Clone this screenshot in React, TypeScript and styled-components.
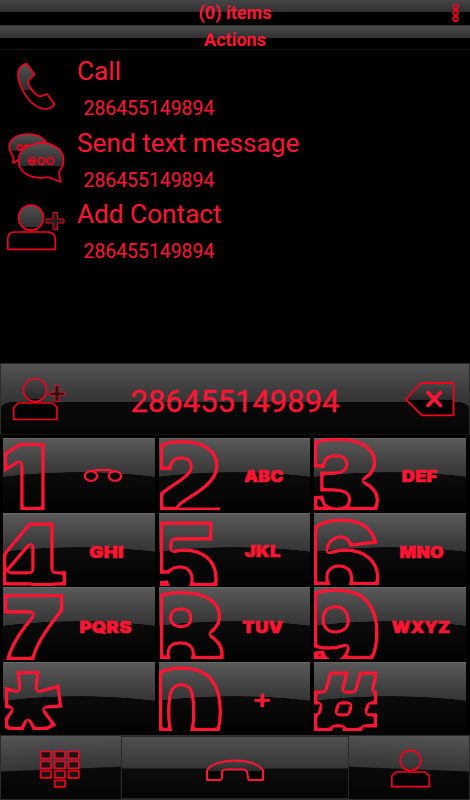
import React from "react";
import styled, { createGlobalStyle, css } from "styled-components";

const RED = "#ff1533";
const LINE = "#f5001c";

const GlobalStyle = createGlobalStyle`
  * { box-sizing: border-box; }
  body { margin: 0; background: #000; font-family: Roboto, "Liberation Sans", sans-serif; color: ${RED}; }
`;

const Screen = styled.div`
  width: 470px;
  height: 800px;
  display: flex;
  flex-direction: column;
  background: #000;
  overflow: hidden;
`;

const TitleBar = styled.header`
  height: 25px;
  display: grid;
  grid-template-columns: 30px 1fr 30px;
  align-items: center;
  justify-items: center;
  font-size: 18px;
  line-height: 24px;
  font-weight: 700;
  background: linear-gradient(#464646 0, #303030 12px, #000 12px);
`;

const SectionBar = styled.div`
  height: 25px;
  text-align: center;
  font-size: 18px;
  line-height: 27px;
  font-weight: 700;
  border-top: 1px solid #333;
  border-bottom: 1px solid #151515;
  background: linear-gradient(#4a4a4a 0, #303030 12px, #000 12px);
`;

const ActionList = styled.main`
  height: 313px;
  flex: none;
  padding-top: 2px;
`;

const ActionRow = styled.section`
  height: 71.5px;
  display: grid;
  grid-template-columns: 77px 1fr;
`;

const ActionText = styled.div`
  display: flex;
  flex-direction: column;
`;

const ActionTitle = styled.div`
  font-size: 26.2px;
  line-height: 38px;
`;

const ActionNumber = styled.div`
  padding-left: 6.5px;
  font-size: 19.4px;
  line-height: 38px;
`;

const NumberBar = styled.section`
  height: 72px;
  flex: none;
  display: grid;
  grid-template-columns: 77px 1fr 77px;
  border: 1px solid #2c2c2c;
  border-bottom-color: #141414;
  background:
    radial-gradient(ellipse 12px 6px at 12px 6px, #090909 96%, transparent) 0 38px / 12px 6px no-repeat,
    radial-gradient(ellipse 12px 6px at 0 6px, #090909 96%, transparent) 100% 38px / 12px 6px no-repeat,
    linear-gradient(#0b0b0b, #090909) 12px 38px / 444px 6px no-repeat,
    linear-gradient(#525252 0, #343434 38px, #303030 44px, #090909 44px, #050505 100%);
`;

const Dialed = styled.div`
  text-align: center;
  font-size: 31px;
  line-height: 76px;
  -webkit-text-stroke: 0.3px ${RED};
`;

const Keypad = styled.section`
  height: 299.5px;
  flex: none;
  padding: 3px 4px 0 3px;
  display: grid;
  grid-template-columns: 151.5px 151.5px 152px;
  grid-template-rows: repeat(4, 74.6px);
  column-gap: 4px;
`;

const Key = styled.button`
  position: relative;
  display: grid;
  grid-template-columns: 50px 1fr;
  height: 73.6px;
  margin: 0;
  padding: 0;
  border: 0;
  border-top: 1px solid #686868;
  overflow: visible;
  background:
    radial-gradient(ellipse 230px 80px at 50% 113px, #090909 0, #0a0a0a 99.3%, transparent 100%) 0 0 / 100% 42px no-repeat,
    linear-gradient(#595959 0, #323232 39px, #090909 42px, #020202 100%);
  color: ${RED};
`;

const KeyLabel = styled.span<{ $plus: boolean; $x: number; $y: number; $wide: number }>`
  grid-column: 2;
  align-self: center;
  justify-self: center;
  font-family: Inter, "Liberation Sans", sans-serif;
  font-weight: ${(p) => (p.$plus ? 600 : 900)};
  font-size: ${(p) => (p.$plus ? 27 : 15.8)}px;
  line-height: 20px;
  padding-top: 4px;
  -webkit-text-stroke: ${(p) => (p.$plus ? 0 : 0.6)}px ${RED};
  letter-spacing: 0.3px;
  transform: translate(${(p) => p.$x}px, ${(p) => p.$y}px) scaleX(${(p) => p.$wide});
`;

type Glyph = {
  char: string;
  /** visible area: x, y, width, height inside the key */
  box: [number, number, number, number];
  left: number;
  top?: number;
  size: number;
  stretch: number;
  fat?: number;
  font?: string;
  label?: string;
  shift?: [number, number];
  wide?: number;
};

const Window = styled.span<{ $box: Glyph["box"] }>`
  position: absolute;
  left: ${(p) => p.$box[0]}px;
  top: ${(p) => p.$box[1] - 1}px;
  width: ${(p) => p.$box[2]}px;
  height: ${(p) => p.$box[3]}px;
  overflow: hidden;
  filter: url(#hollow);
`;

const BigGlyph = styled.span<{ $g: Glyph }>`
  position: absolute;
  transform-origin: 0 0;
  ${({ $g: g }) => css`
    left: ${g.left}px;
    top: ${(g.top ?? 0) + (g.fat ?? 7) / 2 - 0.147 * g.size}px;
    font: 900 ${g.size}px/1 ${g.font ?? '"Liberation Sans"'}, sans-serif;
    -webkit-text-stroke: ${g.fat ?? 7}px ${RED};
    transform: scaleX(${g.stretch});
  `}
`;

const BottomBar = styled.nav`
  flex: 1;
  display: grid;
  grid-template-columns: 120px 228px 1fr;
  border: 1px solid #2b2b2b;
  background: #090909;
`;

const NavButton = styled.button<{ $kind: "left" | "call" | "right" }>`
  display: block;
  padding: 0;
  margin: 0;
  border: 0;
  ${(p) =>
    p.$kind === "call"
      ? css`
          border: 1px solid #292929;
          outline: 1px solid #4a4a4a22;
          background: linear-gradient(#505050 0, #363636 31px, #0b0b0b 32px, #050505 100%);
        `
      : css`
          background: linear-gradient(${p.$kind === "left" ? "177.7deg" : "182.3deg"}, #545454 0, #353535 35px, #090909 36px, #040404 100%);
        `}
`;

const Icon = styled.svg`
  display: block;
  fill: none;
  stroke: ${LINE};
  stroke-width: 1.7;
  stroke-linejoin: round;
`;

const keys: Glyph[] = [
  { char: "1", box: [1, 5, 43, 67], left: -6, size: 104, stretch: 1.08, fat: 2, font: "Inter" },
  { char: "2", box: [1, 2, 61, 70], left: -18, size: 115, stretch: 1.24, label: "ABC", shift: [5, 0] },
  { char: "3", box: [0, 0, 67, 72], left: -20, size: 117, stretch: 1.32, label: "DEF", shift: [5, 0], wide: 1.15 },
  { char: "4", box: [0, 8, 63, 65], left: -16, size: 110, stretch: 1.28, fat: 3, label: "GHI", shift: [3, 1], wide: 1.18 },
  { char: "5", box: [1, 8, 60, 65], left: -18, size: 117, stretch: 1.16, label: "JKL", shift: [3, 0], wide: 1.15 },
  { char: "6", box: [0, 5, 67, 67], left: -17, size: 119, stretch: 1.26, label: "MNO", shift: [6.5, 1] },
  { char: "7", box: [1, 6, 61, 67], left: -15, size: 112, stretch: 1.22, label: "PQRS", shift: [2, 2], wide: 1.16 },
  { char: "8", box: [1, 3, 64, 69], left: -22, size: 119, stretch: 1.29, fat: 8, label: "TUV", shift: [4, 2], wide: 1.15 },
  { char: "9", box: [0, 1, 67, 71], left: -21, size: 119, stretch: 1.31, label: "WXYZ", shift: [6, 1.5], wide: 1.08 },
  { char: "*", box: [2, 9, 62, 59], left: -12, top: 1, size: 130, stretch: 1, fat: 4, font: '"Open Sans"' },
  { char: "0", box: [0, 4, 66, 65], left: -20, size: 119, stretch: 1.28, label: "+", shift: [3, -2], wide: 1.15 },
  { char: "#", box: [0, 8, 63, 61], left: -7, size: 98, stretch: 1.35, fat: 7 },
];

const Dots = () => (
  <Icon width="12" height="22" viewBox="-.6 0 12 22">
    <circle cx="6" cy="5" r="2.3" /><circle cx="6" cy="11" r="2.3" /><circle cx="6" cy="17" r="2.3" />
  </Icon>
);

const PhoneIcon = () => (
  <Icon width="77" height="71" viewBox="0 52 77 71">
    <path fill="url(#gloss)" d="M26.5 63.5 34.5 74.5 28.5 80.5C27 85 35 95 40 96.5L47 94l7.5 10.5C51 109 46 110 39 107.5 28 103 17 84 18 72 18.7 68 22 65 26.5 63.5Z" />
  </Icon>
);

const ChatIcon = () => (
  <Icon width="77" height="71" viewBox="0 123.5 77 71">
    <path fill="url(#gloss)" d="M13 162.5C14 159 14 156 11 152.5 6 144 12 133.5 28 133.5 38 133.5 45 138 47.5 145L25 160 19 159Z" />
    <circle cx="20" cy="147" r="2.5" /><circle cx="27" cy="147" r="2.5" />
    <path fill="url(#gloss)" d="M60.5 181.5 59 171C66 164 65 152 56 146.5 42 138 18 144 18.5 161 19 173 33 180 48 176.5Z" />
    <circle cx="32" cy="160.5" r="3.3" /><circle cx="41.5" cy="160.5" r="3.3" /><circle cx="50.5" cy="160.5" r="3.3" />
    <path d="M29 160.5h5" />
  </Icon>
);

const AddPersonIcon = () => (
  <Icon width="77" height="71" viewBox="0 195 77 71">
    <circle cx="31" cy="217.7" r="12.5" fill="url(#glossDeep)" />
    <path d="M7.8 249.3V237.5Q9 232 14 232H48.5Q54 232.5 55.2 237.5V249.3Z" />
    <path strokeWidth="1" fill="#202020" d="M53 212.5h4.5v6.5H64v4h-6.5v6.7H53V223h-6.8v-4H53Z" />
  </Icon>
);

const AddSmallIcon = () => (
  <Icon width="77" height="70" viewBox="1 364 77 70">
    <circle cx="35" cy="390" r="11.5" fill="url(#shadeLow)" />
    <path fill="#020202" d="M13.7 419.5V407.5l4.5-4.5H52.5l4.5 4.5v12Z" />
    <path strokeWidth="1" fill="#1b1b1b" d="M55 385.5h4v6.7h5.5v3.3H59v6h-4v-6h-5.5v-3.3H55Z" />
  </Icon>
);

const BackspaceIcon = () => (
  <Icon width="77" height="70" viewBox="392 364 77 70">
    <path fill="url(#shade)" d="M405.8 399.3 421 383h32.5v32.3H422Z" strokeWidth="1.8" />
    <path d="M428 392.5 440.5 405.5M440.5 392.5 428 405.5" stroke={RED} strokeWidth="3.8" strokeLinecap="round" />
  </Icon>
);

const Voicemail = styled(Icon)`
  grid-column: 2;
  align-self: center;
  justify-self: center;
  stroke: ${RED};
  stroke-width: 2.2;
`;

const HiddenDefs = styled.svg`
  position: absolute;
`;

export default function App() {
  return (
    <Screen>
      <GlobalStyle />
      <HiddenDefs width="0" height="0">
        <defs>
          <filter id="hollow" x="-5%" y="-5%" width="110%" height="110%" colorInterpolationFilters="sRGB">
            <feGaussianBlur in="SourceAlpha" stdDeviation="2" result="soft" />
            <feComponentTransfer in="soft" result="inner">
              <feFuncA type="linear" slope="20" intercept="-18.1" />
            </feComponentTransfer>
            <feComposite in="SourceGraphic" in2="inner" operator="out" />
          </filter>
          <linearGradient id="gloss" x1="0" y1="0" x2="0" y2="1">
            <stop offset="0" stopColor="#535353" />
            <stop offset=".58" stopColor="#2c2c2c" />
            <stop offset=".59" stopColor="#000" />
          </linearGradient>
          <linearGradient id="glossDeep" x1="0" y1="0" x2="0" y2="1">
            <stop offset="0" stopColor="#505050" />
            <stop offset=".86" stopColor="#303030" />
            <stop offset=".88" stopColor="#000" />
          </linearGradient>
          <linearGradient id="shade" x1="0" y1="0" x2="0" y2="1">
            <stop offset="0" stopColor="#484848" />
            <stop offset=".52" stopColor="#292929" />
            <stop offset=".54" stopColor="#000" />
          </linearGradient>
          <linearGradient id="shadeLow" x1="0" y1="0" x2="0" y2="1">
            <stop offset="0" stopColor="#474747" />
            <stop offset=".88" stopColor="#292929" />
            <stop offset=".9" stopColor="#000" />
          </linearGradient>
        </defs>
      </HiddenDefs>

      <TitleBar><i /><span>(0) items</span><Dots /></TitleBar>
      <SectionBar>Actions</SectionBar>

      <ActionList>
        {[
          { title: "Call", icon: <PhoneIcon /> },
          { title: "Send text message", icon: <ChatIcon /> },
          { title: "Add Contact", icon: <AddPersonIcon /> },
        ].map((a) => (
          <ActionRow key={a.title}>
            {a.icon}
            <ActionText>
              <ActionTitle>{a.title}</ActionTitle>
              <ActionNumber>286455149894</ActionNumber>
            </ActionText>
          </ActionRow>
        ))}
      </ActionList>

      <NumberBar>
        <AddSmallIcon />
        <Dialed>286455149894</Dialed>
        <BackspaceIcon />
      </NumberBar>

      <Keypad>
        {keys.map((g) => (
          <Key key={g.char}>
            <Window $box={g.box}><BigGlyph $g={g}>{g.char}</BigGlyph></Window>
            {g.label && (
              <KeyLabel $plus={g.label === "+"} $x={g.shift?.[0] ?? 0} $y={g.shift?.[1] ?? 0} $wide={g.wide ?? 1.1}>
                {g.label}
              </KeyLabel>
            )}
            {g.char === "1" && (
              <Voicemail width="40" height="14" viewBox="1 0 40 14">
                <ellipse cx="8" cy="8" rx="6.2" ry="4.8" /><ellipse cx="32" cy="8" rx="6.2" ry="4.8" />
                <path d="M8 3.2Q20 .5 32 3.2" />
              </Voicemail>
            )}
          </Key>
        ))}
      </Keypad>

      <BottomBar>
        <NavButton $kind="left">
          <Icon width="120" height="62" viewBox="1 736 120 62">
            {[751.5, 761.5, 771].map((y) =>
              [40.7, 54.7, 68.5].map((x) => <rect key={`${x}-${y}`} x={x} y={y} width="10.3" height="6.8" fill="#161616" />)
            )}
            <rect x="54.7" y="780.3" width="10.3" height="6.5" fill="#161616" />
          </Icon>
        </NavButton>
        <NavButton $kind="call">
          <Icon width="226" height="60" viewBox="122 737 226 60">
            <path strokeWidth="2" fill="url(#shade)" stroke={RED} d="M207 780V770.5C210 765 221 760.5 235 760.5S260 765 263 770.5V780H248.5L247 771.5Q246 769.5 243 769.5H226Q223 769.5 222 771.5V778L220.5 780Z" />
          </Icon>
        </NavButton>
        <NavButton $kind="right">
          <Icon width="120" height="62" viewBox="349 736 120 62">
            <circle cx="410.5" cy="760.5" r="10.2" />
            <path fill="#030303" d="M391.8 786.7V776l4-4H425.3l4 4v10.7Z" />
          </Icon>
        </NavButton>
      </BottomBar>
    </Screen>
  );
}
